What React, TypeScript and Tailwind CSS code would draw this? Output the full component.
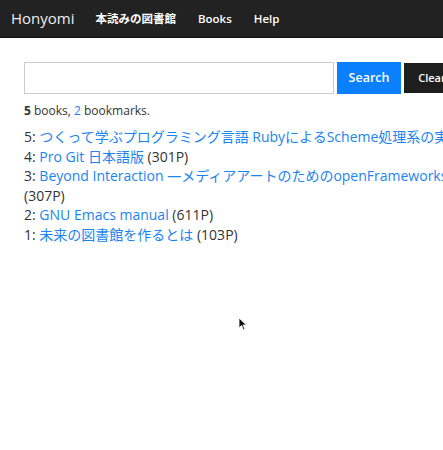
import React from 'react';

const books = [
  { id: 5, title: 'つくって学ぶプログラミング言語 RubyによるScheme処理系の実装', pages: null },
  { id: 4, title: 'Pro Git 日本語版', pages: 301 },
  { id: 3, title: 'Beyond Interaction —メディアアートのためのopenFrameworks', pages: 307 },
  { id: 2, title: 'GNU Emacs manual', pages: 611 },
  { id: 1, title: '未来の図書館を作るとは', pages: 103 },
];

export default function App() {
  return (
    <div
      className="relative w-[443px] h-[450px] overflow-hidden bg-white text-[#333]"
      style={{ fontFamily: '"Open Sans", "Noto Sans CJK JP", sans-serif' }}
    >
      <nav className="h-[38px] bg-[#222] border-b border-[#111] flex items-center">
        <a className="pl-[11px] pr-[21px] text-[15px] text-[#eee]">Honyomi</a>
        <a className="pr-[22px] text-[11.5px] font-semibold text-white">本読みの図書館</a>
        <a className="pr-[22px] text-[11.5px] font-semibold text-white">Books</a>
        <a className="text-[11.5px] font-semibold text-white">Help</a>
      </nav>

      <div className="w-[480px] pl-[24px] pt-[24px]">
        <div className="flex items-center gap-[3px]">
          <input className="w-[310px] h-[32px] border border-[#ccc] bg-white" />
          <button className="w-[64px] h-[32px] bg-[#0a80ff] text-white text-[12.5px] font-semibold">Search</button>
          <button className="w-[56px] h-[30px] bg-[#1e1e1e] text-white text-[11px] font-semibold">Clear</button>
        </div>

        <p className="mt-[8px] text-[12px]">
          <b>5</b> books, <span className="text-[#1a84f0]">2</span> bookmarks.
        </p>

        <ul className="mt-[7px] text-[14px] leading-[19.5px]">
          {books.map((b) => (
            <li key={b.id} className={b.id === 5 ? 'whitespace-nowrap' : 'w-[430px]'}>
              {b.id}:&nbsp;<a className="text-[#1a84f0]">{b.title}</a>
              {b.pages && <> ({b.pages}P)</>}
            </li>
          ))}
        </ul>
      </div>

      {/* mouse pointer */}
      <svg className="absolute left-[238px] top-[317px]" width="10" height="14" viewBox="0 0 10 14">
        <path d="M1 1 L1 11 L3.5 8.5 L5.5 13 L7 12.3 L5 8 L8.5 8 Z" fill="#111" stroke="#fff" strokeWidth="0.8" />
      </svg>
    </div>
  );
}
